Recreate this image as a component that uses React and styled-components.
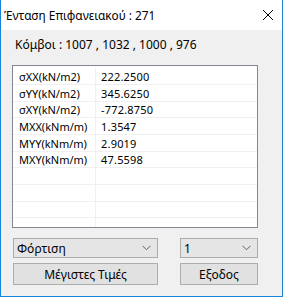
import React from 'react';
import styled, { createGlobalStyle } from 'styled-components';

const GlobalStyle = createGlobalStyle`
  html, body { margin: 0; padding: 0; background: #ffffff; }
  * { box-sizing: border-box; }
`;

const Window = styled.div`
  width: 283px;
  height: 297px;
  display: flex;
  flex-direction: column;
  border: 1px solid #1883d7;
  border-top: none;
  font-family: "Noto Sans", "Open Sans", sans-serif;
  font-size: 12px;
  color: #000;
  overflow: hidden;
`;

const TitleBar = styled.div`
  height: 30px;
  background: #ffffff;
  display: flex;
  align-items: center;
  justify-content: space-between;
  padding-left: 3px;
  padding-right: 8px;
  flex-shrink: 0;
`;

const Title = styled.span`
  font-size: 11.8px;
`;

const CloseIcon = styled.svg`
  width: 10px;
  height: 10px;
  margin-right: 1px;
`;

const Body = styled.div`
  flex: 1;
  background: #f0f0f0;
  padding: 0 24px 0 11px;
  display: flex;
  flex-direction: column;
`;

const Nodes = styled.div`
  height: 35px;
  display: flex;
  align-items: center;
  padding-left: 3px;
  padding-bottom: 6px;
`;

const ListBox = styled.div`
  width: 246px;
  height: 163px;
  flex-shrink: 0;
  background: #ffffff;
  border: 1px solid #828790;
  padding-top: 2px;
  overflow: hidden;
  font-size: 11px;
`;

const Row = styled.div`
  display: grid;
  grid-template-columns: 83px 1fr;
  height: ${p => p.h}px;
  border-bottom: 1px solid #f0f0f0;
`;

const Cell = styled.div`
  display: flex;
  align-items: center;
  padding-left: ${p => (p.value ? '5px' : '6px')};
  border-right: ${p => (p.value ? 'none' : '1px solid #f0f0f0')};
  white-space: nowrap;
  line-height: 15px;
  letter-spacing: ${p => (p.value ? '0.2px' : '0')};
`;

const Controls = styled.div`
  display: grid;
  grid-template-columns: 145px 78px;
  grid-template-rows: 20px 22px;
  justify-content: space-between;
  row-gap: 5px;
  margin-top: 10px;
  padding-left: 1px;
`;

const Combo = styled.div`
  background: #e5e5e5;
  border: 1px solid #acacac;
  display: flex;
  align-items: center;
  justify-content: space-between;
  padding: 0 6px 0 3px;
`;

const Chevron = styled.svg`
  width: 9px;
  height: 6px;
`;

const Button = styled.div`
  background: #e1e1e1;
  border: 1px solid #adadad;
  display: flex;
  align-items: center;
  justify-content: center;
`;

const rows = [
  ['σXX(kN/m2)', '222.2500'],
  ['σYY(kN/m2)', '345.6250'],
  ['σXY(kN/m2)', '-772.8750'],
  ['MXX(kNm/m)', '1.3547'],
  ['MYY(kNm/m)', '2.9019'],
  ['MXY(kNm/m)', '47.5598'],
  ['', ''],
  ['', ''],
  ['', ''],
  ['', ''],
];

const Arrow = () => (
  <Chevron viewBox="0 0 9 6">
    <path d="M0.5 0.8 L4.5 4.8 L8.5 0.8" fill="none" stroke="#606060" strokeWidth="1" />
  </Chevron>
);

export default function App() {
  return (
    <>
      <GlobalStyle />
      <Window>
        <TitleBar>
          <Title>Ένταση Επιφανειακού : 271</Title>
          <CloseIcon viewBox="0 0 10 10">
            <path d="M0 0 L10 10 M10 0 L0 10" stroke="#000" strokeWidth="1" />
          </CloseIcon>
        </TitleBar>
        <Body>
          <Nodes>Κόμβοι : 1007 , 1032 , 1000 , 976</Nodes>
          <ListBox>
            {rows.map(([label, value], i) => (
              <Row key={i} h={i % 3 === 2 ? 16 : 17}>
                <Cell>{label}</Cell>
                <Cell value>{value}</Cell>
              </Row>
            ))}
          </ListBox>
          <Controls>
            <Combo>
              <span>Φόρτιση</span>
              <Arrow />
            </Combo>
            <Combo>
              <span>1</span>
              <Arrow />
            </Combo>
            <Button>Μέγιστες Τιμές</Button>
            <Button>Εξοδος</Button>
          </Controls>
        </Body>
      </Window>
    </>
  );
}
